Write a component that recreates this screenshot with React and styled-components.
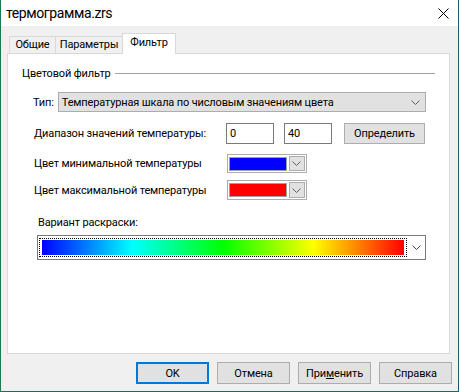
import React from 'react'
import styled, { createGlobalStyle } from 'styled-components'

const GlobalStyle = createGlobalStyle`
  html, body { margin: 0; padding: 0; background: #f0f0f0; }
  body {
    font-family: Roboto, "Noto Sans", "Liberation Sans", sans-serif;
    font-size: 11px;
    letter-spacing: -0.15px;
    color: #000;
    white-space: nowrap;
  }
`

const Chevron = ({ color = '#606060' }) => (
  <svg width="9" height="5" viewBox="0 0 9 5">
    <polyline points="0.5,0.5 4.5,4.5 8.5,0.5" fill="none" stroke={color} strokeWidth="1" />
  </svg>
)

const CloseIcon = () => (
  <svg width="11" height="11" viewBox="0 0 11 11">
    <path d="M0.5 0.5 L10.5 10.5 M10.5 0.5 L0.5 10.5" stroke="#000" strokeWidth="1" />
  </svg>
)

export default function App() {
  return (
    <>
      <GlobalStyle />
      <Window>
        <TitleBar>
          <span>термограмма.zrs</span>
          <CloseIcon />
        </TitleBar>
        <Body>
          <TabRow>
            <Tab $w={47}>Общие</Tab>
            <Tab $w={68}>Параметры</Tab>
            <Tab $w={54} $active>Фильтр</Tab>
          </TabRow>
          <Panel>
            <GroupHeader>
              <span>Цветовой фильтр</span>
              <GroupLine />
            </GroupHeader>

            <TypeRow>
              <span>Тип:</span>
              <Select>
                <span>Температурная шкала по числовым значениям цвета</span>
                <Chevron />
              </Select>
            </TypeRow>

            <Row $top={11} $h={21}>
              <Label $w={192}>Диапазон значений температуры:</Label>
              <Input>0</Input>
              <Input $gap={10}>40</Input>
              <Button $w={81} $gap={12}>Определить</Button>
            </Row>

            <Row $top={10} $h={19}>
              <Label $w={193}>Цвет минимальной температуры</Label>
              <ColorPicker>
                <Swatch $color="#0000ff" />
                <DropBtn><Chevron /></DropBtn>
              </ColorPicker>
            </Row>

            <Row $top={7} $h={20}>
              <Label $w={193}>Цвет максимальной температуры</Label>
              <ColorPicker>
                <Swatch $color="#ff0000" />
                <DropBtn><Chevron /></DropBtn>
              </ColorPicker>
            </Row>

            <SchemeLabel>Вариант раскраски:</SchemeLabel>
            <GradientCombo>
              <FocusRect>
                <Gradient />
              </FocusRect>
              <ComboArrow><Chevron color="#404040" /></ComboArrow>
            </GradientCombo>
          </Panel>

          <ButtonRow>
            <Button $w={73} $h={22} $default>OK</Button>
            <Button $w={73} $h={22}>Отмена</Button>
            <Button $w={73} $h={22}>При<u>м</u>енить</Button>
            <Button $w={73} $h={22}>Справка</Button>
          </ButtonRow>
        </Body>
      </Window>
    </>
  )
}

const Window = styled.div`
  width: 459px;
  height: 392px;
  box-sizing: border-box;
  border-left: 1px solid #1d7a4a;
  border-right: 1px solid #1c5a7c;
  border-bottom: 1px solid #1f6a60;
  background: #f0f0f0;
  display: flex;
  flex-direction: column;
`

const TitleBar = styled.div`
  height: 26px;
  flex: none;
  background: #fff;
  display: flex;
  align-items: center;
  justify-content: space-between;
  padding: 0 9px 0 5px;
  font-size: 14px;
  letter-spacing: -0.4px;
`

const Body = styled.div`
  flex: 1;
  padding: 7px 0 0 6px;
`

const TabRow = styled.div`
  display: flex;
  align-items: flex-end;
  height: 20px;
  padding-left: 3px;
`

const Tab = styled.div`
  width: ${p => p.$w}px;
  height: ${p => (p.$active ? 21 : 17)}px;
  box-sizing: border-box;
  margin-left: -1px;
  margin-bottom: ${p => (p.$active ? -1 : 0)}px;
  position: relative;
  z-index: ${p => (p.$active ? 2 : 1)};
  border: 1px solid #d9d9d9;
  border-bottom: none;
  background: ${p => (p.$active ? '#fff' : '#f0f0f0')};
  display: flex;
  justify-content: center;
  padding-top: ${p => (p.$active ? 2 : 1)}px;
  line-height: 14px;
`

const Panel = styled.div`
  width: 443px;
  height: 301px;
  box-sizing: border-box;
  background: #fff;
  border: 1px solid #d9d9d9;
  padding: 12px 14px 0 14px;
`

const GroupHeader = styled.div`
  display: flex;
  align-items: center;
  gap: 4px;
  height: 14px;
`

const GroupLine = styled.div`
  flex: 1;
  height: 1px;
  background: #a0a0a0;
`

const TypeRow = styled.div`
  display: flex;
  align-items: center;
  margin-top: 12px;
  height: 20px;
  padding-left: 11px;
  gap: 4px;
`

const Select = styled.div`
  width: 368px;
  height: 20px;
  box-sizing: border-box;
  background: #e1e1e1;
  border: 1px solid #adadad;
  display: flex;
  align-items: center;
  justify-content: space-between;
  padding: 0 5px 0 3px;
`

const Row = styled.div`
  display: flex;
  align-items: center;
  margin-top: ${p => p.$top}px;
  height: ${p => p.$h}px;
  padding-left: 12px;
`

const Label = styled.span`
  width: ${p => p.$w}px;
  flex: none;
`

const Input = styled.div`
  width: 48px;
  height: 21px;
  box-sizing: border-box;
  margin-left: ${p => p.$gap || 0}px;
  border: 1px solid #7a7a7a;
  background: #fff;
  padding-left: 3px;
  display: flex;
  align-items: center;
`

const Button = styled.div`
  width: ${p => p.$w}px;
  height: ${p => p.$h || 21}px;
  box-sizing: border-box;
  margin-left: ${p => p.$gap || 0}px;
  background: #e1e1e1;
  border: ${p => (p.$default ? '2px solid #0078d7' : '1px solid #adadad')};
  display: flex;
  align-items: center;
  justify-content: center;
`

const ColorPicker = styled.div`
  width: 80px;
  height: 100%;
  box-sizing: border-box;
  border: 1px solid #adadad;
  background: #fff;
  display: flex;
  align-items: center;
  padding: 0 1px;
  gap: 2px;
`

const Swatch = styled.div`
  width: 58px;
  height: 12px;
  background: ${p => p.$color};
  border: 1px solid #a0a0a0;
`

const DropBtn = styled.div`
  width: 17px;
  height: calc(100% - 2px);
  box-sizing: border-box;
  background: #e1e1e1;
  border: 1px solid #adadad;
  display: flex;
  align-items: center;
  justify-content: center;
`

const SchemeLabel = styled.div`
  margin-top: 16px;
  padding-left: 16px;
  height: 14px;
  line-height: 14px;
`

const GradientCombo = styled.div`
  margin-top: 5px;
  margin-left: 15px;
  width: 389px;
  height: 25px;
  box-sizing: border-box;
  border: 1px solid #7a7a7a;
  background: #fff;
  display: flex;
  align-items: center;
  padding: 0 0 0 1px;
`

const FocusRect = styled.div`
  width: 368px;
  height: 19px;
  box-sizing: border-box;
  border: 1px dotted #000;
  padding: 1px 2px;
`

const Gradient = styled.div`
  height: 100%;
  background: linear-gradient(to right, #0000ff 0%, #00ffff 25%, #00ff00 50%, #ffff00 75%, #ff0000 100%);
`

const ComboArrow = styled.div`
  flex: 1;
  display: flex;
  justify-content: center;
`

const ButtonRow = styled.div`
  display: flex;
  justify-content: flex-end;
  gap: 8px;
  margin-top: 8px;
  padding-right: 6px;
`
